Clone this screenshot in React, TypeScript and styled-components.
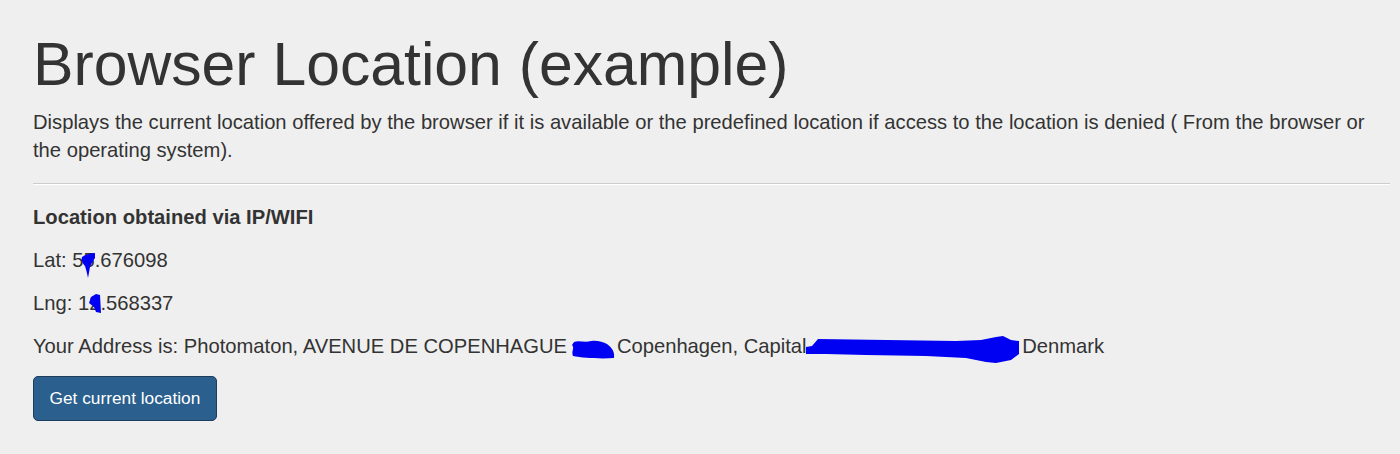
import React from "react";
import styled, { createGlobalStyle } from "styled-components";

const Global = createGlobalStyle`
  html, body { margin: 0; padding: 0; background: #efefef; }
  body {
    font-family: "Liberation Sans", Arial, Helvetica, sans-serif;
    color: #333333;
    font-size: 20.2px;
    line-height: 1.42857;
  }
`;

const Page = styled.main`
  padding: 31px 10px 0 33px;
`;

const Title = styled.h1`
  margin: 0 0 10px;
  font-size: 60.7px;
  font-weight: 400;
  line-height: 1.1;
  color: #333333;
`;

const Lead = styled.p`
  margin: 0;
  font-size: 20.2px;
  line-height: 28.57px;
`;

const Rule = styled.hr`
  margin: 18px 0 18px;
  border: 0;
  border-top: 1px solid #cccccc;
  border-bottom: 1px solid #ffffff;
`;

const Line = styled.p<{ $bold?: boolean }>`
  margin: 0 0 ${(p) => (p.$bold ? "15px" : "14.3px")};
  font-size: 20.2px;
  line-height: 28.57px;
  font-weight: ${(p) => (p.$bold ? 700 : 400)};
  white-space: nowrap;
`;

const Redacted = styled.span<{ $w?: number }>`
  position: relative;
  display: inline-block;
  vertical-align: top;
  height: 28.57px;
  ${(p) => (p.$w !== undefined ? `width: ${p.$w}px;` : "")}
`;

const Blob = styled.svg`
  position: absolute;
  fill: #0000f2;
  overflow: visible;
`;

const Button = styled.button`
  margin-top: 1px;
  height: 45px;
  padding: 0 15.5px;
  font-family: "Liberation Sans", Arial, Helvetica, sans-serif;
  font-size: 17.3px;
  color: #ffffff;
  background: #2a5f8e;
  border: 1px solid #1d3d5c;
  border-radius: 5px;
  cursor: pointer;
`;

type Mark = { left: number; top: number; w: number; h: number; d: string };

const Scribble: React.FC<Mark> = ({ left, top, w, h, d }) => (
  <Blob
    width={w}
    height={h}
    viewBox={`0 0 ${w} ${h}`}
    style={{ left, top }}
    aria-hidden
  >
    <path d={d} />
  </Blob>
);

export default function App() {
  return (
    <>
      <Global />
      <Page>
        <Title>Browser Location (example)</Title>
        <Lead>
          Displays the current location offered by the browser if it is available or the predefined location if
          access to the location is denied ( From the browser or the operating system).
        </Lead>
        <Rule />
        <Line $bold>Location obtained via IP/WIFI</Line>
        <Line>
          Lat: 5
          <Redacted>
            5
            <Scribble
              left={-3}
              top={7}
              w={15}
              h={25}
              d="M1 4 C4 2 9 0 14 0 L14 5 C12 8 10 11 9 14 L7 25 C6 20 5 16 4 13 C2 11 0 8 1 4 Z"
            />
          </Redacted>
          .676098
        </Line>
        <Line>
          Lng: 1
          <Redacted>
            2
            <Scribble
              left={0}
              top={5}
              w={12}
              h={19}
              d="M2 3 L7 0 L11 1 L12 19 L7 18 L5 13 L0 9 Z"
            />
          </Redacted>
          .568337
        </Line>
        <Line>
          Your Address is: Photomaton, AVENUE DE COPENHAGUE{" "}
          <Redacted $w={33}>
            <Scribble
              left={-2}
              top={7}
              w={44}
              h={20}
              d="M3 3 C8 1 14 4 20 2 C26 1 32 3 36 5 C40 8 44 12 43 19 C30 20 12 19 2 17 C0 12 4 9 1 6 Z"
            />
          </Redacted>
          , Copenhagen, Capital{" "}
          <Redacted $w={210}>
            <Scribble
              left={-6}
              top={4}
              w={213}
              h={27}
              d="M0 11 L6 10 L12 3 L150 5 L175 4 L190 1 L197 0 L205 4 L213 5 L213 18 L205 24 L190 27 L180 26 L160 22 L120 20 L60 19 L20 18 L0 18 Z"
            />
          </Redacted>
          Denmark
        </Line>
        <Button type="button">Get current location</Button>
      </Page>
    </>
  );
}
